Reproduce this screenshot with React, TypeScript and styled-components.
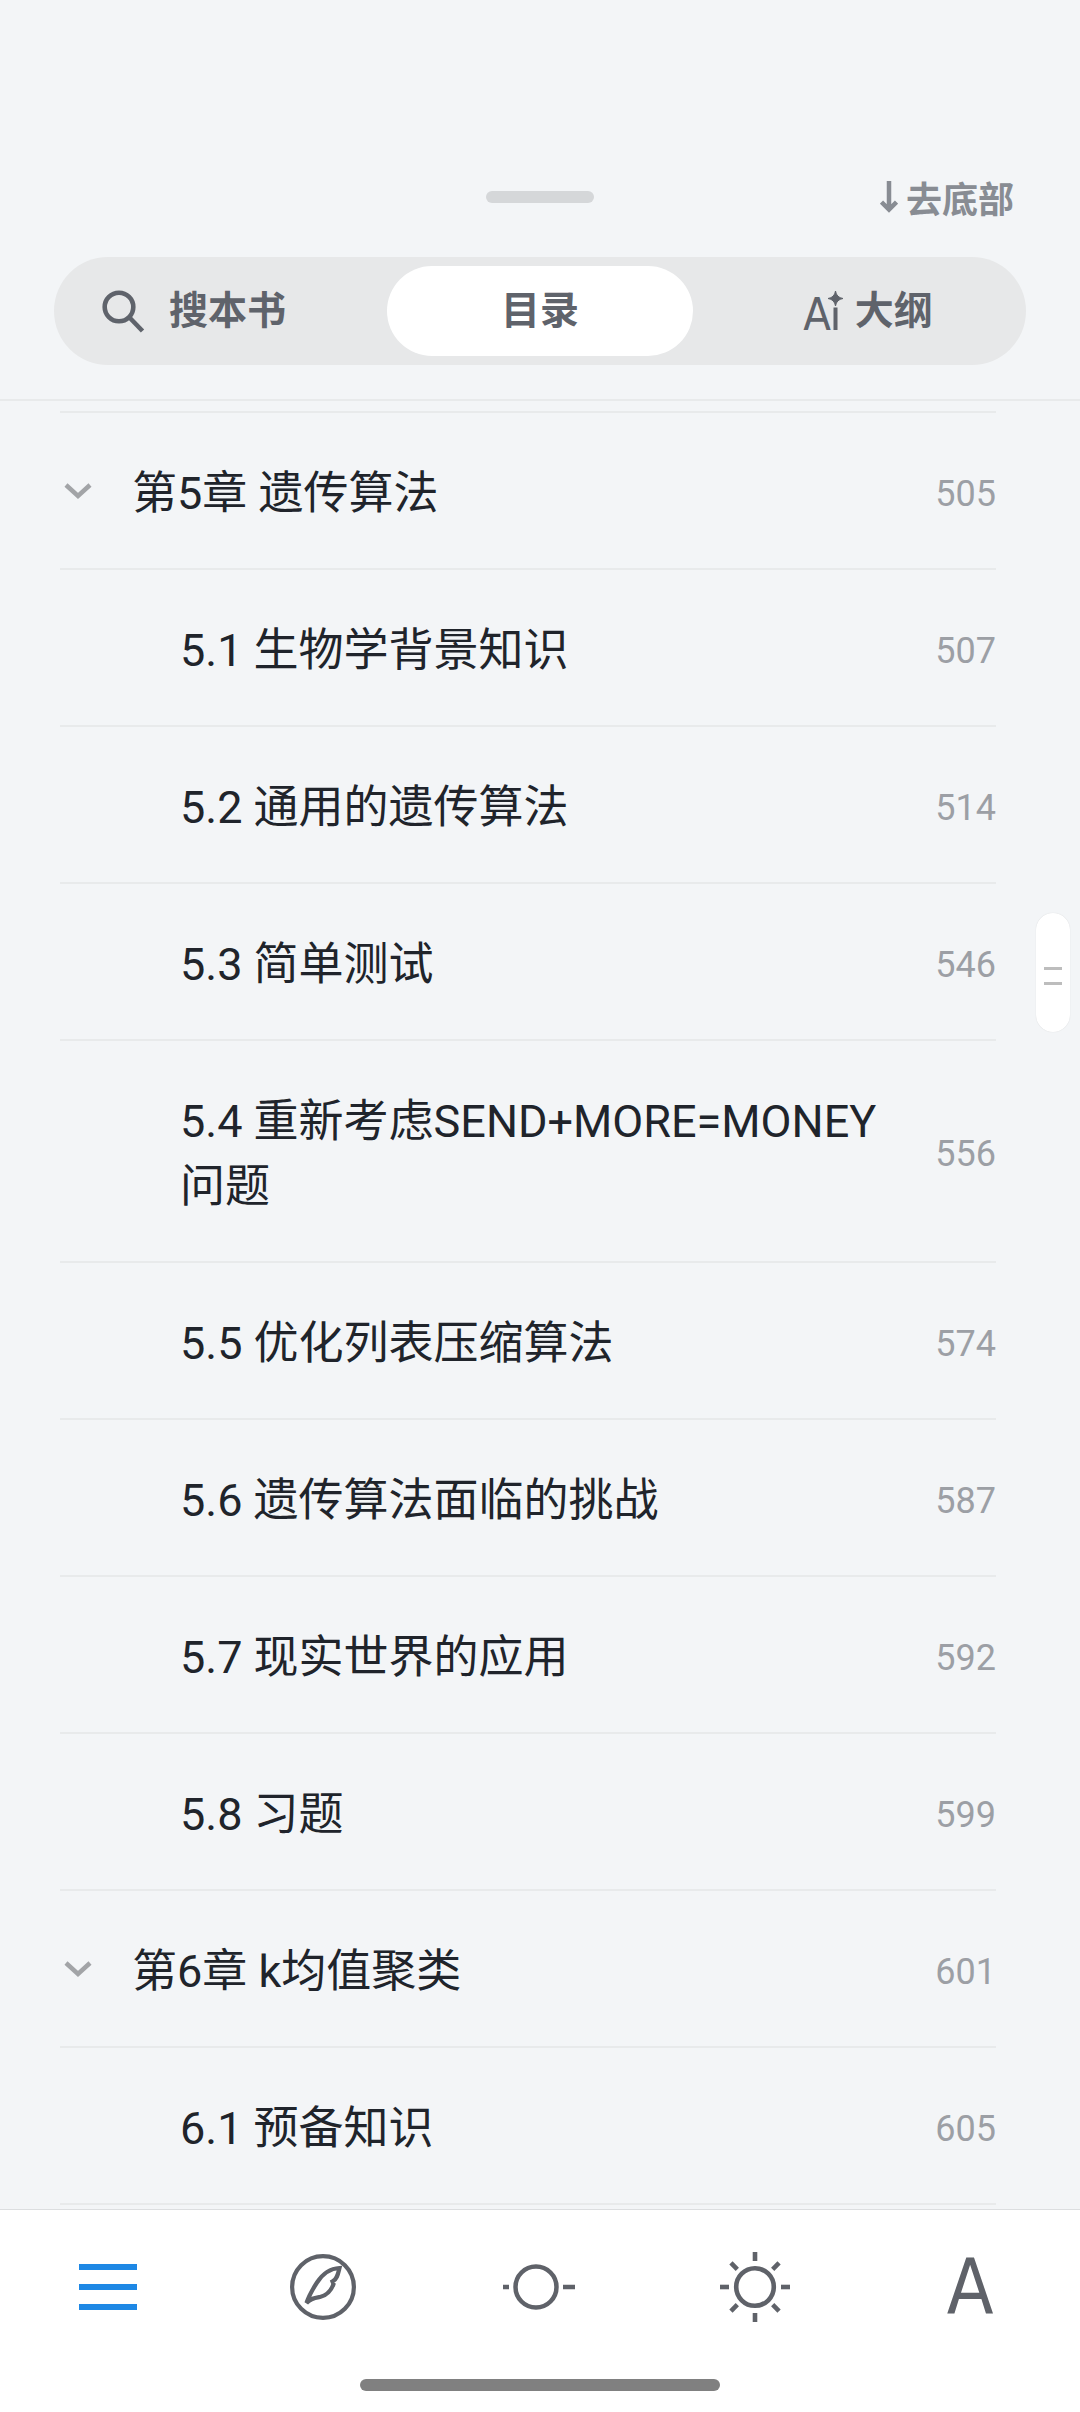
import React, { useState } from 'react';
import styled, { createGlobalStyle } from 'styled-components';

const ink = '#20242b';
const slate = '#5f636b';
const muted = '#9c9fa5';
const line = '#e8eaeb';

const GlobalStyle = createGlobalStyle`
  *, *::before, *::after { box-sizing: border-box; }
  body {
    margin: 0;
    background: #f3f5f7;
    font-family: Roboto, "Noto Sans CJK SC", sans-serif;
    color: ${ink};
  }
  button {
    margin: 0;
    padding: 0;
    border: 0;
    background: none;
    font: inherit;
    color: inherit;
    cursor: pointer;
  }
`;

const Screen = styled.div`
  display: flex;
  flex-direction: column;
  min-height: 100vh;
`;

const Header = styled.header`
  display: flex;
  flex-direction: column;
  gap: 33px;
  padding: 170px 54px 34px;
  border-bottom: 2px solid ${line};
`;

const SheetBar = styled.div`
  display: grid;
  grid-template-columns: 1fr auto 1fr;
  align-items: center;
  height: 54px;
  padding-right: 12px;
  padding-left: 12px;
`;

const Grabber = styled.span<{ $width: number; $color: string }>`
  display: block;
  width: ${(p) => p.$width}px;
  height: 12px;
  border-radius: 6px;
  background: ${(p) => p.$color};
`;

const JumpButton = styled.button`
  grid-column: 3;
  justify-self: end;
  display: flex;
  align-items: center;
  gap: 8px;
  font-family: "Noto Sans CJK SC", sans-serif;
  font-size: 36px;
  line-height: 54px;
  font-weight: 700;
  color: #888c93;
`;

const Tabs = styled.div`
  display: grid;
  grid-template-columns: repeat(3, 1fr);
  height: 108px;
  border-radius: 54px;
  background: #e7e8e9;
`;

const Tab = styled.button<{ $active?: boolean; $start?: boolean; $inset?: number }>`
  display: flex;
  align-items: center;
  justify-content: ${(p) => (p.$start ? 'flex-start' : 'center')};
  gap: ${(p) => (p.$start ? 24 : 12)}px;
  margin: 9px;
  padding-left: ${(p) => p.$inset ?? 0}px;
  border-radius: 45px;
  background: ${(p) => (p.$active ? '#fff' : 'transparent')};
  font-size: 39px;
  line-height: 58px;
  font-weight: 700;
  color: ${slate};
`;

const AiMark = styled.span`
  display: flex;
  align-items: baseline;
  padding-top: 8px;
  font-family: "DejaVu Sans Condensed", "DejaVu Sans", sans-serif;
  font-size: 45px;
  line-height: 58px;
  font-weight: 400;
  svg { margin-left: -3px; }
`;

const Contents = styled.main`
  flex: 1;
  padding: 10px 84px 4px 60px;
`;

const Entries = styled.ol`
  margin: 0;
  padding: 0;
  list-style: none;
  border-top: 2px solid ${line};
`;

const Entry = styled.li`
  display: flex;
  align-items: center;
  border-bottom: 2px solid ${line};
`;

const Fold = styled.button<{ $open: boolean }>`
  display: flex;
  width: 72px;
  height: 65px;
  padding-left: 3px;
  align-items: center;
  svg { transform: ${(p) => (p.$open ? 'none' : 'rotate(-90deg)')}; }
`;

const EntryLink = styled.a<{ $nested: boolean }>`
  flex: 1;
  display: flex;
  align-items: center;
  justify-content: space-between;
  gap: 36px;
  padding: 48px 0 42px ${(p) => (p.$nested ? 120 : 0)}px;
  color: ${ink};
  text-decoration: none;
`;

const Title = styled.span`
  font-size: 45px;
  line-height: 65px;
`;

const Page = styled.span`
  font-size: 36px;
  line-height: 54px;
  color: ${muted};
`;

const ScrollThumb = styled.button`
  position: fixed;
  top: 913px;
  right: 10px;
  display: flex;
  flex-direction: column;
  align-items: center;
  justify-content: center;
  gap: 12px;
  width: 34px;
  height: 119px;
  border-radius: 17px;
  background: #fff;
  box-shadow: 0 0 1px rgba(0, 0, 0, 0.16);
  padding-top: 6px;
`;

const Ridge = styled.span`
  width: 18px;
  height: 3px;
  background: #bdbdbd;
`;

const Dock = styled.footer`
  display: flex;
  flex-direction: column;
  align-items: center;
  gap: 15px;
  padding-bottom: 21px;
  border-top: 1px solid #dcdee0;
  background: #fff;
`;

const DockRow = styled.nav`
  display: grid;
  grid-template-columns: repeat(5, 1fr);
  align-self: stretch;
  height: 154px;
  padding-right: 2px;
`;

const DockButton = styled.button<{ $active?: boolean }>`
  display: flex;
  align-items: center;
  justify-content: center;
  color: ${(p) => (p.$active ? '#1e88e5' : '#5f6269')};
`;

const FontGlyph = styled.span`
  font-family: "DejaVu Sans Condensed", "DejaVu Sans", sans-serif;
  font-size: 76px;
  line-height: 90px;
`;

const ArrowDown = () => (
  <svg width="18" height="34" viewBox="0 0 18 34" fill="none" stroke="currentColor" strokeWidth="4.500" aria-hidden="true">
    <path d="M9 1V29M1.500 22l7.500 7.500 7.500-7.500" />
  </svg>
);

const SearchIcon = () => (
  <svg width="43" height="43" viewBox="0 0 43 43" fill="none" stroke="currentColor" strokeWidth="4.600" aria-hidden="true">
    <circle cx="17" cy="17" r="14.300" />
    <path d="M27 27L40.500 41" />
  </svg>
);

const SparkStem = () => (
  <svg width="15" height="39" viewBox="0 0 15 39" fill="currentColor" aria-hidden="true">
    <path d="M7.500 0Q8.500 6.500 15 7.500Q8.500 8.500 7.500 15Q6.500 8.500 0 7.500Q6.500 6.500 7.500 0Z" stroke="currentColor" strokeWidth="1" />
    <rect x="5.500" y="16.500" width="4" height="22.500" />
  </svg>
);

const Chevron = () => (
  <svg width="30" height="18" viewBox="0 0 30 18" fill="none" stroke="#a2a4a7" strokeWidth="4.500" aria-hidden="true">
    <path d="M3 3l12 11L27 3" />
  </svg>
);

const MenuIcon = () => (
  <svg width="58" height="48" viewBox="0 0 58 48" fill="currentColor" aria-hidden="true">
    <rect y="1" width="58" height="6" />
    <rect y="21" width="58" height="6" />
    <rect y="41" width="58" height="6" />
  </svg>
);

const FeatherIcon = () => (
  <svg width="66" height="66" viewBox="0 0 66 66" fill="none" stroke="currentColor" strokeWidth="4.200" aria-hidden="true">
    <circle cx="33" cy="33" r="30.900" />
    <path d="M49.500 14C40 14.500 32.500 20 27 28.500C21.500 37 18.500 43 16.500 49C20.500 44.500 24.500 44 30 43C36.500 41.500 41.500 36 43.500 30L42.500 27.500C47 25.500 48 20 49.500 14Z" />
  </svg>
);

const SliderIcon = () => (
  <svg width="72" height="46" viewBox="0 0 72 46" fill="none" stroke="currentColor" strokeWidth="4.500" aria-hidden="true">
    <circle cx="33" cy="23" r="20.500" />
    <path d="M0 23h6M60 23h12" />
  </svg>
);

const SunIcon = () => (
  <svg width="70" height="70" viewBox="-35 -35 70 70" fill="none" stroke="currentColor" strokeWidth="4.600" aria-hidden="true">
    <circle r="18.800" />
    {[0, 45, 90, 135, 180, 225, 270, 315].map((angle) => (
      <path key={angle} d={angle % 90 ? 'M0 -25V-34' : 'M0 -26V-35'} transform={`rotate(${angle})`} />
    ))}
  </svg>
);

type Section = { title: string; page: number };
type Chapter = Section & { sections: Section[] };

const chapters: Chapter[] = [
  {
    title: '第5章 遗传算法',
    page: 505,
    sections: [
      { title: '5.1 生物学背景知识', page: 507 },
      { title: '5.2 通用的遗传算法', page: 514 },
      { title: '5.3 简单测试', page: 546 },
      { title: '5.4 重新考虑SEND+MORE=MONEY问题', page: 556 },
      { title: '5.5 优化列表压缩算法', page: 574 },
      { title: '5.6 遗传算法面临的挑战', page: 587 },
      { title: '5.7 现实世界的应用', page: 592 },
      { title: '5.8 习题', page: 599 },
    ],
  },
  {
    title: '第6章 k均值聚类',
    page: 601,
    sections: [{ title: '6.1 预备知识', page: 605 }],
  },
];

const EntryBody = ({ title, page, nested = false }: Section & { nested?: boolean }) => (
  <EntryLink href={`#page-${page}`} $nested={nested}>
    <Title>{title}</Title>
    <Page>{page}</Page>
  </EntryLink>
);

export default function App() {
  const [closed, setClosed] = useState<number[]>([]);
  const toggle = (page: number) =>
    setClosed((now) => (now.includes(page) ? now.filter((p) => p !== page) : [...now, page]));

  return (
    <Screen>
      <GlobalStyle />
      <Header>
        <SheetBar>
          <span />
          <Grabber $width={108} $color="#d5d7d9" />
          <JumpButton type="button">
            <ArrowDown />
            去底部
          </JumpButton>
        </SheetBar>
        <Tabs role="tablist">
          <Tab type="button" role="tab" aria-selected={false} $start $inset={39}>
            <SearchIcon />
            搜本书
          </Tab>
          <Tab type="button" role="tab" aria-selected $active>
            目录
          </Tab>
          <Tab type="button" role="tab" aria-selected={false} $inset={8}>
            <AiMark>
              A
              <SparkStem />
            </AiMark>
            大纲
          </Tab>
        </Tabs>
      </Header>

      <Contents>
        <Entries>
          {chapters.map((chapter) => {
            const open = !closed.includes(chapter.page);
            return (
              <React.Fragment key={chapter.page}>
                <Entry>
                  <Fold
                    type="button"
                    $open={open}
                    aria-expanded={open}
                    aria-label={chapter.title}
                    onClick={() => toggle(chapter.page)}
                  >
                    <Chevron />
                  </Fold>
                  <EntryBody title={chapter.title} page={chapter.page} />
                </Entry>
                {open &&
                  chapter.sections.map((section) => (
                    <Entry key={section.page}>
                      <EntryBody {...section} nested />
                    </Entry>
                  ))}
              </React.Fragment>
            );
          })}
        </Entries>
      </Contents>

      <ScrollThumb type="button" aria-label="滚动">
        <Ridge />
        <Ridge />
      </ScrollThumb>

      <Dock>
        <DockRow>
          <DockButton type="button" aria-label="目录" $active>
            <MenuIcon />
          </DockButton>
          <DockButton type="button" aria-label="笔记">
            <FeatherIcon />
          </DockButton>
          <DockButton type="button" aria-label="进度">
            <SliderIcon />
          </DockButton>
          <DockButton type="button" aria-label="亮度">
            <SunIcon />
          </DockButton>
          <DockButton type="button" aria-label="字体">
            <FontGlyph>A</FontGlyph>
          </DockButton>
        </DockRow>
        <Grabber $width={360} $color="#808080" />
      </Dock>
    </Screen>
  );
}
